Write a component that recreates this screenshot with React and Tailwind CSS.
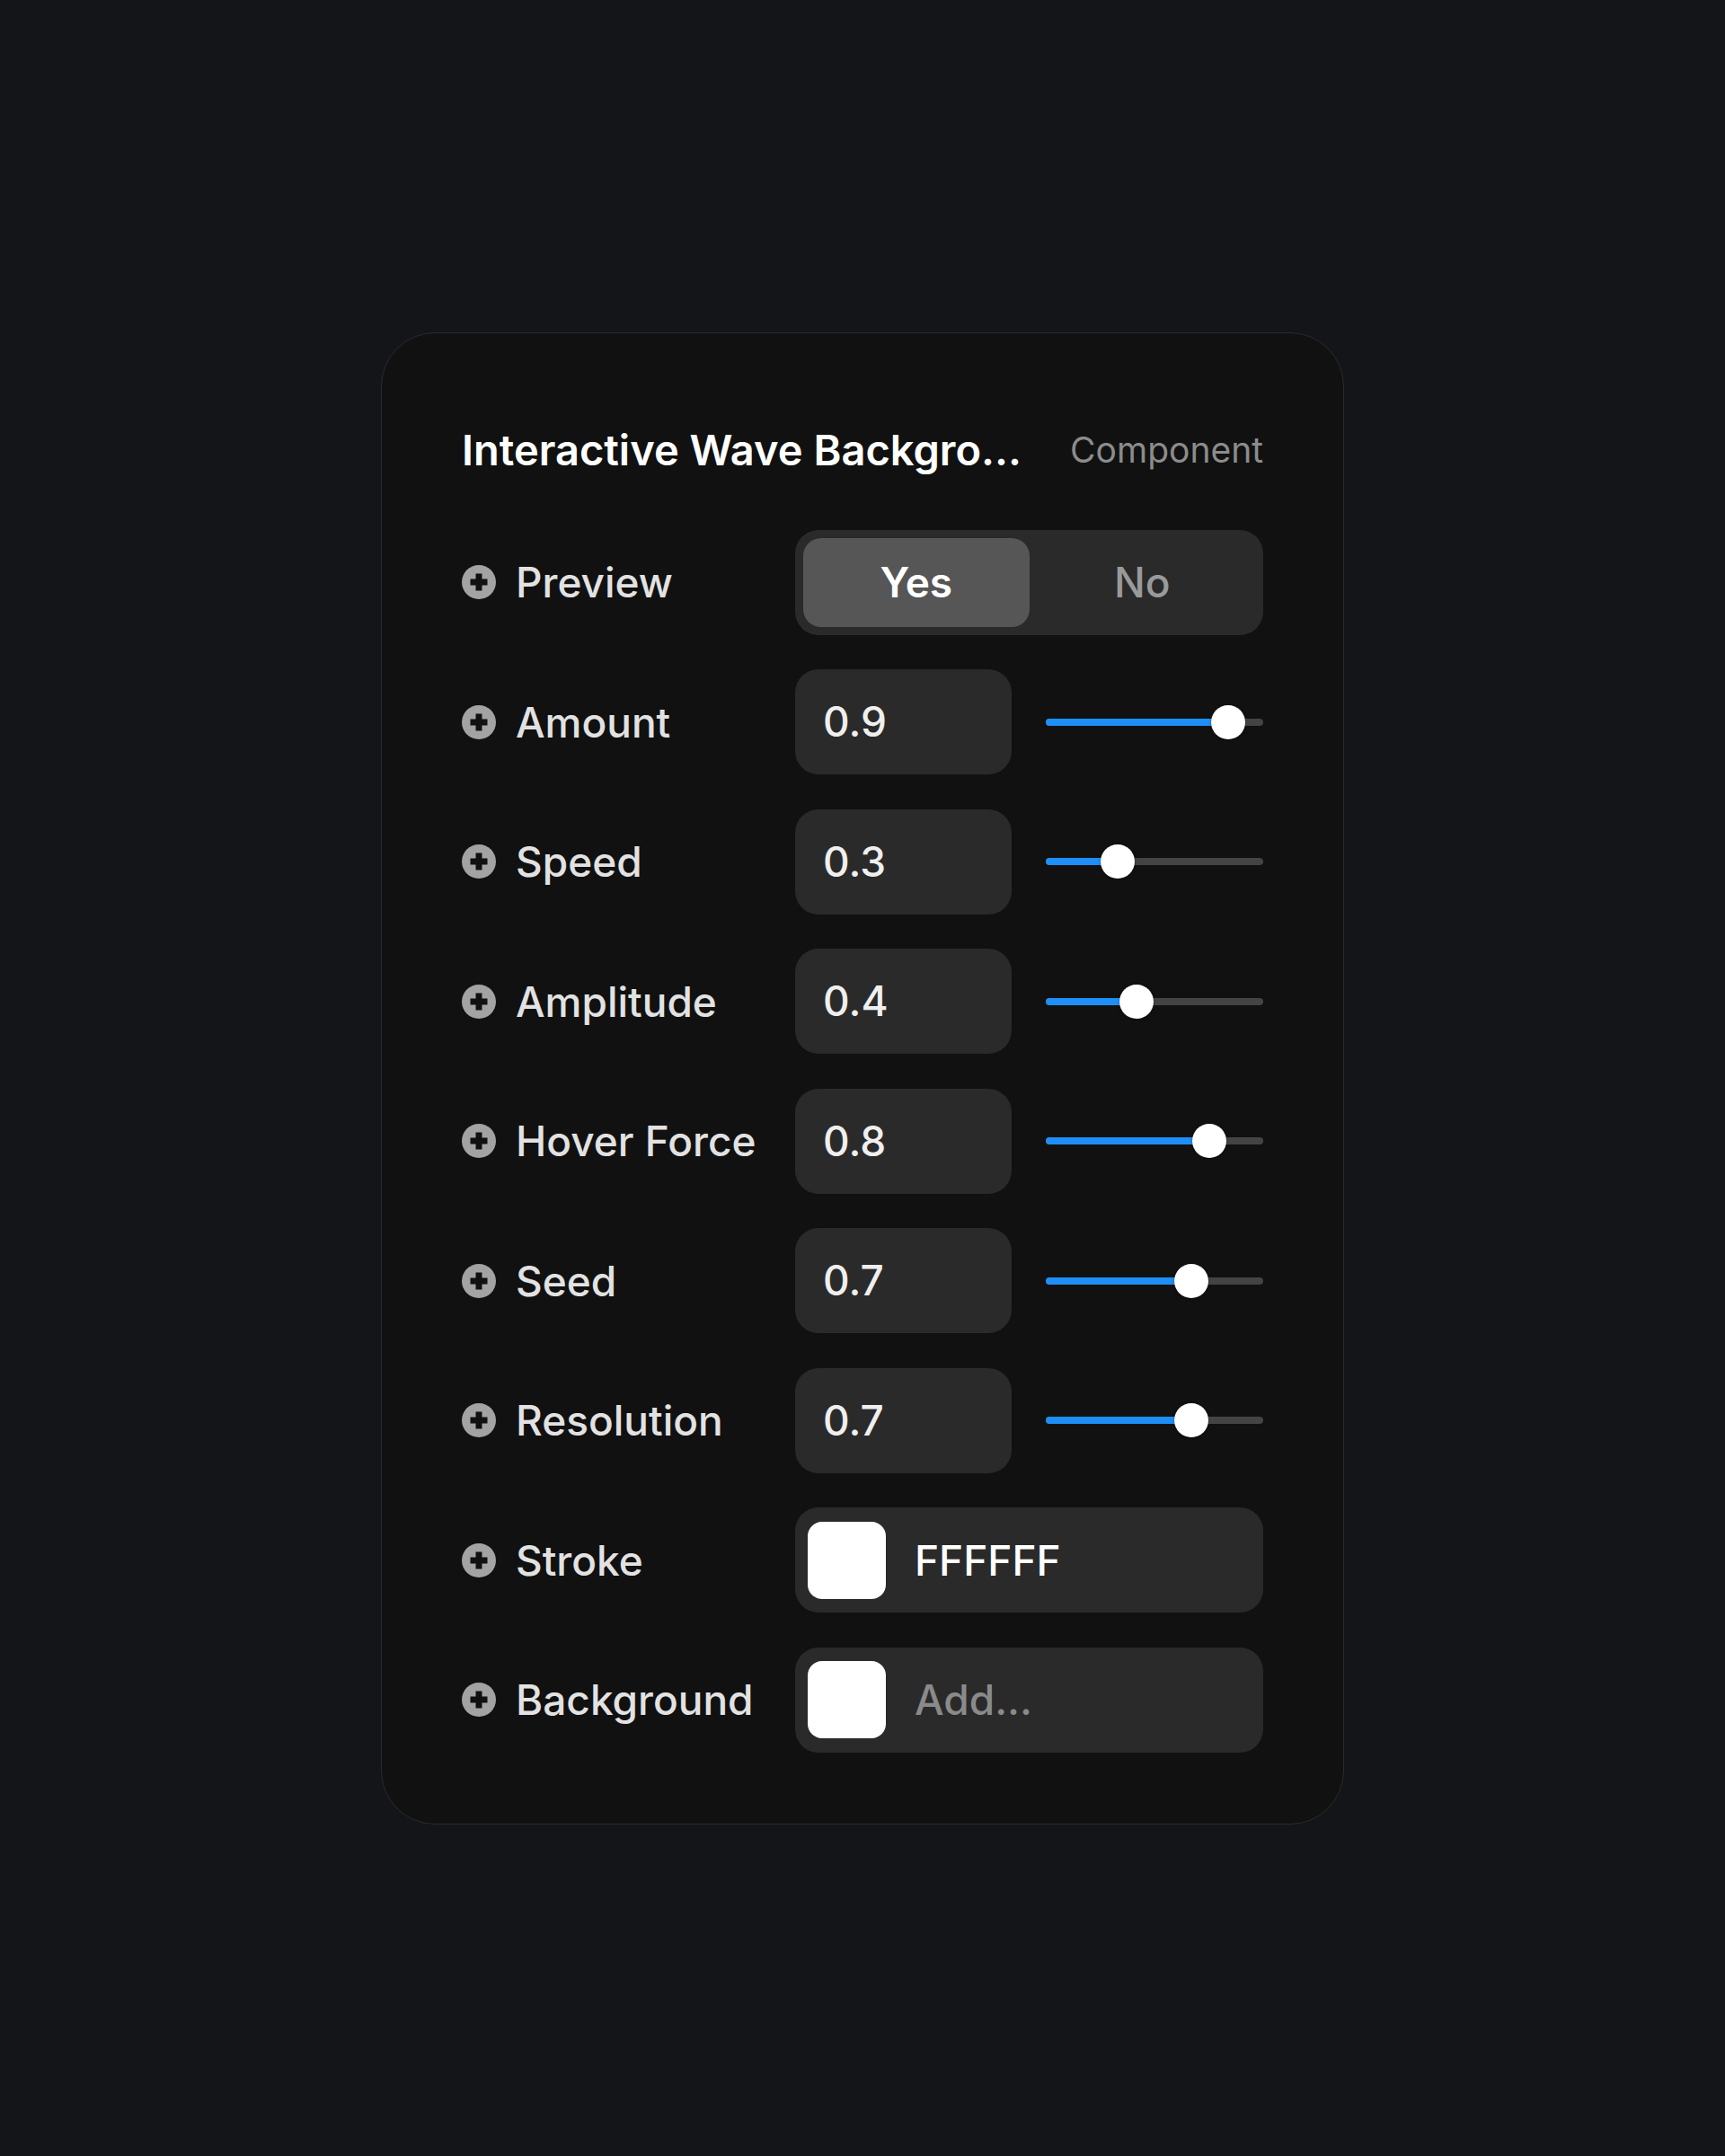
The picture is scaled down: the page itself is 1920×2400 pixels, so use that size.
import React from "react";

const sliders = [
  { label: "Amount", value: 0.9 },
  { label: "Speed", value: 0.3 },
  { label: "Amplitude", value: 0.4 },
  { label: "Hover Force", value: 0.8 },
  { label: "Seed", value: 0.7 },
  { label: "Resolution", value: 0.7 },
];

function PlusIcon() {
  return (
    <svg width="38" height="38" viewBox="0 0 24 24" className="shrink-0">
      <circle cx="12" cy="12" r="12" fill="#a3a3a3" />
      <path d="M12 6v12M6 12h12" stroke="#111111" strokeWidth="4.4" />
    </svg>
  );
}

function Label({ children }) {
  return (
    <div className="flex items-center gap-[22px] w-[371px]">
      <PlusIcon />
      <span className="text-[46px] font-medium text-[#e2e2e2] leading-none">{children}</span>
    </div>
  );
}

function Slider({ value }) {
  // thumb centre moves inside the track, inset by its radius
  const left = 19 + value * 204;
  return (
    <div className="relative h-[38px] w-[242px]">
      <div className="absolute left-0 right-0 top-[15px] h-[8px] rounded-full bg-[#444444]" />
      <div
        className="absolute left-0 top-[15px] h-[8px] rounded-full bg-[#1e8ff7]"
        style={{ width: left }}
      />
      <div
        className="absolute top-0 h-[38px] w-[38px] rounded-full bg-white shadow-[0_1px_3px_rgba(0,0,0,0.4)]"
        style={{ left: left - 19 }}
      />
    </div>
  );
}

function ColorRow({ label, text, muted }) {
  return (
    <div className="flex items-center h-[117px]">
      <Label>{label}</Label>
      <div className="flex items-center w-[521px] h-[117px] rounded-[26px] bg-[#2a2a2a] pl-[14px]">
        <div className="w-[87px] h-[86px] rounded-[16px] bg-white" />
        <span
          className={
            muted
              ? "ml-[32px] text-[46px] font-medium leading-none text-[#8a8a8a]"
              : "ml-[32px] text-[46px] font-medium leading-none text-white"
          }
        >
          {text}
        </span>
      </div>
    </div>
  );
}

export default function App() {
  return (
    <div
      className="min-h-[2400px] bg-[#141518] flex items-center justify-center"
      style={{ fontFamily: "Inter, 'Noto Sans', sans-serif" }}
    >
      <div className="w-[1072px] rounded-[60px] border border-[#2a2b2e] bg-[#111111] px-[89px] pt-[103px] pb-[79px]">
        <div className="flex items-center justify-between h-[54px]">
          <span className="text-[47px] font-semibold text-white leading-none">
            Interactive Wave Backgro...
          </span>
          <span className="text-[39px] text-[#8c8c8c] leading-none">Component</span>
        </div>

        <div className="mt-[62px] flex flex-col gap-[38.5px]">
          <div className="flex items-center h-[117px]">
            <Label>Preview</Label>
            <div className="flex w-[521px] h-[117px] rounded-[26px] bg-[#2a2a2a] p-[9px]">
              <div className="flex-1 flex items-center justify-center rounded-[20px] bg-[#565656] text-[46px] font-semibold text-white">
                Yes
              </div>
              <div className="flex-1 flex items-center justify-center text-[46px] font-medium text-[#9a9a9a]">
                No
              </div>
            </div>
          </div>

          {sliders.map((s) => (
            <div key={s.label} className="flex items-center h-[117px]">
              <Label>{s.label}</Label>
              <div className="flex items-center w-[241px] h-[117px] rounded-[26px] bg-[#2a2a2a] pl-[31px] text-[46px] font-medium text-[#efefef]">
                {s.value}
              </div>
              <div className="ml-[38px]">
                <Slider value={s.value} />
              </div>
            </div>
          ))}

          <ColorRow label="Stroke" text="FFFFFF" />
          <ColorRow label="Background" text="Add..." muted />
        </div>
      </div>
    </div>
  );
}
